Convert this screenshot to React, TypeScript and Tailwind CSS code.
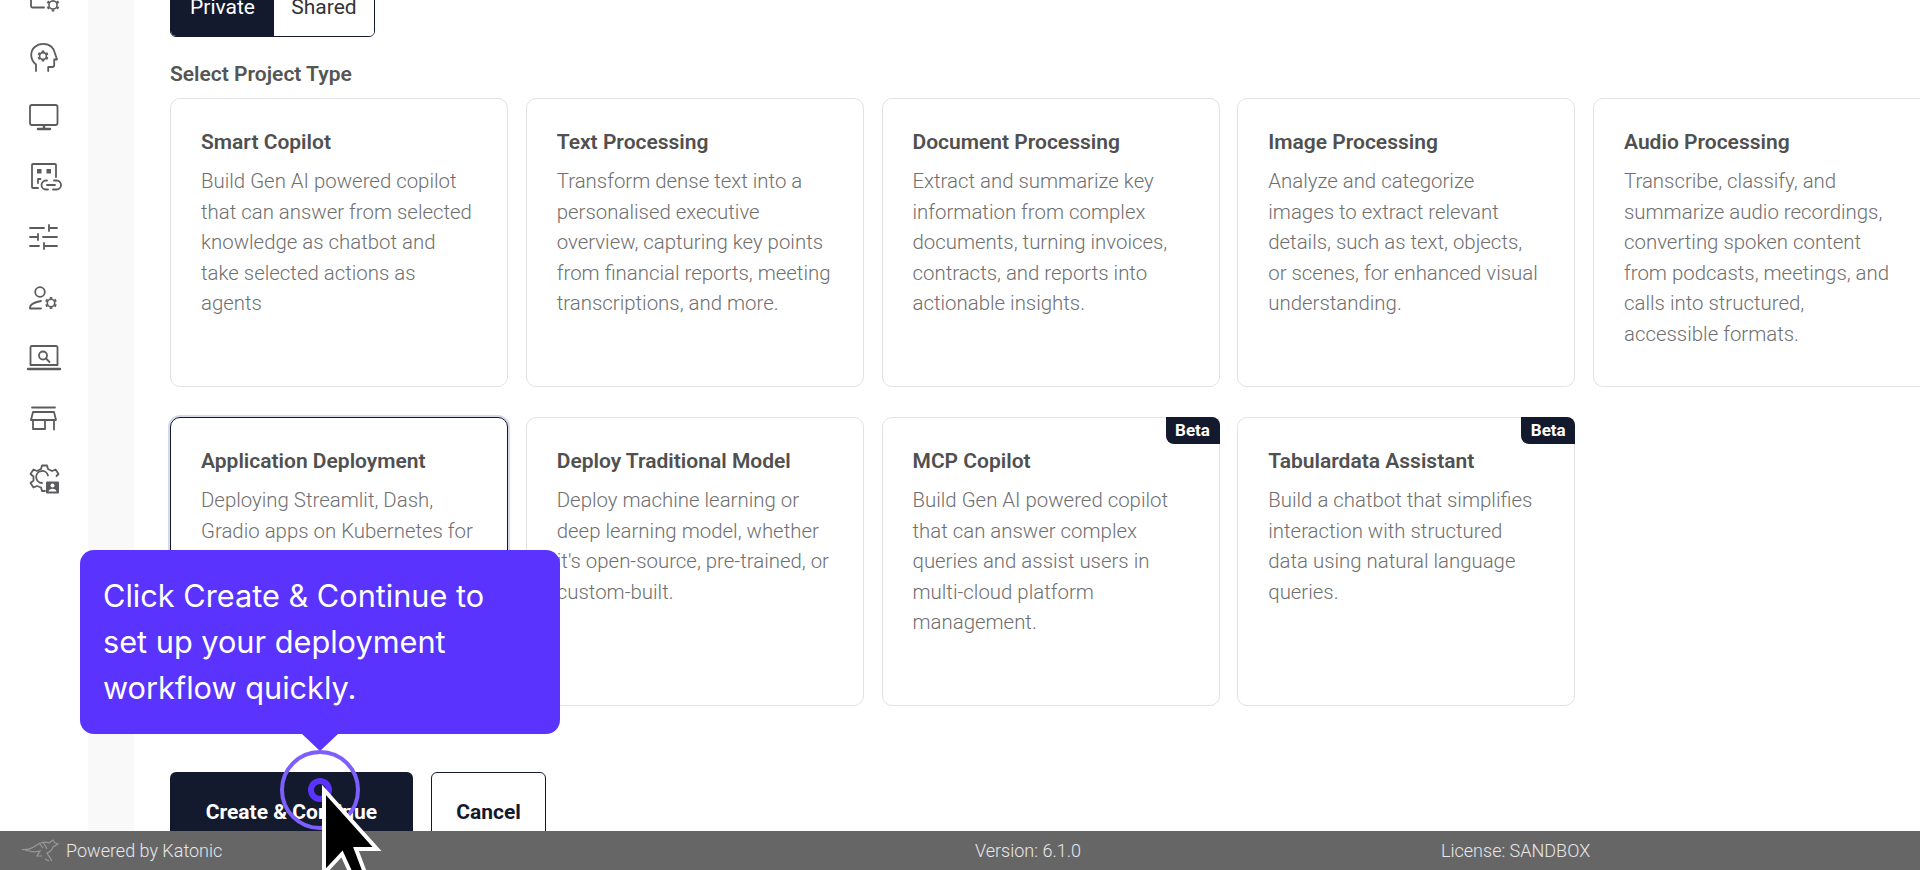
import React from 'react';

interface ProjectType {
  title: string;
  lines: string[];
  selected?: boolean;
  beta?: boolean;
}

const projectTypes: ProjectType[] = [
  {
    title: 'Smart Copilot',
    lines: ['Build Gen AI powered copilot', 'that can answer from selected', 'knowledge as chatbot and', 'take selected actions as', 'agents'],
  },
  {
    title: 'Text Processing',
    lines: ['Transform dense text into a', 'personalised executive', 'overview, capturing key points', 'from financial reports, meeting', 'transcriptions, and more.'],
  },
  {
    title: 'Document Processing',
    lines: ['Extract and summarize key', 'information from complex', 'documents, turning invoices,', 'contracts, and reports into', 'actionable insights.'],
  },
  {
    title: 'Image Processing',
    lines: ['Analyze and categorize', 'images to extract relevant', 'details, such as text, objects,', 'or scenes, for enhanced visual', 'understanding.'],
  },
  {
    title: 'Audio Processing',
    lines: ['Transcribe, classify, and', 'summarize audio recordings,', 'converting spoken content', 'from podcasts, meetings, and', 'calls into structured,', 'accessible formats.'],
  },
  {
    title: 'Application Deployment',
    lines: ['Deploying Streamlit, Dash,', 'Gradio apps on Kubernetes for', 'better scalability and', 'easier management.'],
    selected: true,
  },
  {
    title: 'Deploy Traditional Model',
    lines: ['Deploy machine learning or', 'deep learning model, whether', "it's open-source, pre-trained, or", 'custom-built.'],
  },
  {
    title: 'MCP Copilot',
    lines: ['Build Gen AI powered copilot', 'that can answer complex', 'queries and assist users in', 'multi-cloud platform', 'management.'],
    beta: true,
  },
  {
    title: 'Tabulardata Assistant',
    lines: ['Build a chatbot that simplifies', 'interaction with structured', 'data using natural language', 'queries.'],
    beta: true,
  },
];

const Gear = ({ x, y, r }: { x: number; y: number; r: number }) => (
  <g transform={`translate(${x} ${y})`}>
    <circle r={r * 0.62} strokeWidth={1.6} />
    {[0, 60, 120, 180, 240, 300].map((a) => (
      <path key={a} d={`M0 ${-r * 0.7}V${-r}`} transform={`rotate(${a})`} strokeWidth={2.6} strokeLinecap="butt" />
    ))}
  </g>
);

// drawn in page coordinates, so each viewBox is just a window round the icon
const navIcons: { cy: number; body: React.ReactNode }[] = [
  {
    cy: -3,
    body: (
      <>
        <path d="M31 -6V6a1.500 1.500 0 0 0 1.500 1.500H44" />
        <Gear x={53} y={5} r={6.500} />
      </>
    ),
  },
  {
    cy: 57,
    body: (
      <>
        <path d="M36 71v-6.500c-3-2.500-4.800-5.800-4.800-9.500 0-6.500 5.500-11.200 12-11.200 6.800 0 11.200 4.400 12 10.200l1.800 5.500h-2.800v5.500a2 2 0 0 1-2 2h-4v4" />
        <Gear x={43} y={56} r={5.500} />
      </>
    ),
  },
  {
    cy: 117,
    body: (
      <>
        <rect x={30} y={105} width={27.500} height={20} rx={2} />
        <path d="M44 125.500v3M38 129h12" strokeWidth={2.400} />
      </>
    ),
  },
  {
    cy: 177,
    body: (
      <>
        <path d="M38 188h-5a1 1 0 0 1-1-1v-22a1 1 0 0 1 1-1h22a1 1 0 0 1 1 1v12" />
        <path d="M37 169h4.500v4.500H37zM46.500 169H51v4.500h-4.500z" fill="#5c5c5f" stroke="none" />
        <path d="M38 183v-4h2.500" />
        <path d="M47 180.500h-1a4.500 4.500 0 0 0 0 9h2M54 180.500h2.500a4.500 4.500 0 0 1 0 9H53M47 185h8" />
      </>
    ),
  },
  {
    cy: 237,
    body: (
      <path d="M30 228h14M50 228h7M49 225v6M30 237h7M43 237h14M38 234v6M30 246h9M44 246h13M44 243v6" />
    ),
  },
  {
    cy: 297,
    body: (
      <>
        <circle cx={40} cy={292} r={4.800} />
        <path d="M30 308.500h11M30 308.500v-1c0-3 5.500-5.500 11-6.500" />
        <Gear x={51} y={303} r={6} />
      </>
    ),
  },
  {
    cy: 357,
    body: (
      <>
        <path d="M30.500 365V347.500a1.500 1.500 0 0 1 1.500-1.500h24a1.500 1.500 0 0 1 1.500 1.500V365z" />
        <path d="M28 369h32" strokeWidth={2.400} />
        <circle cx={43} cy={355.500} r={4} />
        <path d="M46 358.500l3.500 3.500" />
      </>
    ),
  },
  {
    cy: 417,
    body: (
      <path d="M32 407.500h23M33 412h21l2 8H31zM33 420v9h12v-9M54 420v9.500" />
    ),
  },
  {
    cy: 477,
    body: (
      <>
        <path d="M45 491l-3 0-1-3.500-4-1.500-3.500 1.500-3-4.500 3-2.500v-4l-3-2.500 3-4.500 3.500 1.500 4-2 1-3.500h5l1 3.500 4 2 3.500-1.500 3 4.500-2 2" />
        <path d="M42 483a6 6 0 1 1 6-7.500" />
        <rect x={46} y={481.500} width={13} height={12} rx={1} fill="#5c5c5f" stroke="none" />
        <circle cx={52.500} cy={485.500} r={2} fill="#fff" stroke="none" />
        <path d="M48.500 491.500c.5-2 2-2.800 4-2.800s3.500.8 4 2.800z" fill="#fff" stroke="none" />
      </>
    ),
  },
];

const Sidebar = () => (
  <div className="w-[88px] shrink-0 bg-white -mt-[33px] flex flex-col">
    {navIcons.map((icon) => (
      <div key={icon.cy} className="h-[60px] flex items-center justify-center">
        <svg
          width={40}
          height={40}
          viewBox={`24 ${icon.cy - 20} 40 40`}
          fill="none"
          stroke="#5c5c5f"
          strokeWidth={1.800}
          strokeLinecap="round"
          strokeLinejoin="round"
        >
          {icon.body}
        </svg>
      </div>
    ))}
  </div>
);

const Card = ({ item }: { item: ProjectType }) => (
  <div
    className={`relative h-[289px] rounded-[10px] bg-white pl-[30px] pr-[20px] pt-[28px] border ${
      item.selected ? 'border-[#141a2e] shadow-[0_0_0_2px_#d5d9ea]' : 'border-[#e2e2e2]'
    }`}
  >
    {item.beta && (
      <span className="absolute -top-px -right-px h-[27px] w-[54px] rounded-tr-[8px] rounded-bl-[8px] bg-[#141a2e] flex items-center justify-center text-[17px] font-bold text-white">
        Beta
      </span>
    )}
    <h3 className="text-[21px] leading-[30px] font-semibold text-[#505050]">{item.title}</h3>
    <div className="mt-[9px] text-[20.4px] leading-[30.6px] font-light text-[#6f6f6f] whitespace-nowrap">
      {item.lines.map((line) => (
        <div key={line}>{line}</div>
      ))}
    </div>
  </div>
);

const GuideOverlay = () => (
  <>
    <div className="absolute left-[80px] top-[550px] w-[480px] h-[184px] rounded-[14px] bg-[#5a33ff] pl-[23px] pt-[23px] font-['Inter',sans-serif] text-[30.7px] leading-[46px] text-white whitespace-nowrap">
      <div>Click Create &amp; Continue to</div>
      <div>set up your deployment</div>
      <div>workflow quickly.</div>
      <div className="absolute left-[222px] top-[184px] w-0 h-0 border-x-[18px] border-x-transparent border-t-[17px] border-t-[#5a33ff]" />
    </div>
    <div className="absolute left-[280px] top-[750px] w-[80px] h-[80px] rounded-full border-[4px] border-[#7d5fff]" />
    <div className="absolute left-[308px] top-[778px] w-[24px] h-[24px] rounded-full border-[6px] border-[#5a33ff]" />
    <svg className="absolute left-[315px] top-[782px]" width={80} height={88} viewBox="0 0 80 88">
      <path
        d="M9 8V88H12L27 72L38 96H52L41 67H62Z"
        fill="#000"
        stroke="#fff"
        strokeWidth={4}
        strokeLinejoin="miter"
      />
    </svg>
  </>
);

const Footer = () => (
  <div className="relative h-[39px] shrink-0 bg-[#666667] flex items-center pb-px text-[18px] font-light text-[#e8e8e8]">
    <div className="w-[975px] shrink-0 flex items-center pl-[21px]">
      <svg width={40} height={26} viewBox="0 0 40 26" fill="none" stroke="#9a9a9a" strokeWidth={1.200} className="mr-[5px]">
        <path d="M1 12.500c6 .5 10-1 14-4 5-3.500 10-4 13-2.500l4-3 2 3 3 1-5 3c-1 3-3 5-6 6l5 8" />
        <path d="M4 13c6 2 12 2 15 1l-3 5h5M18 6l4 5M22 5l4 7M24 22l4 2" />
      </svg>
      <span>Powered by Katonic</span>
    </div>
    <div className="w-[466px] shrink-0">Version: 6.1.0</div>
    <div>License: SANDBOX</div>
  </div>
);

export default function App() {
  return (
    <div className="relative h-screen w-full overflow-hidden bg-white flex flex-col font-['Roboto',sans-serif]">
      <div className="flex-1 min-h-0 flex overflow-hidden">
        <Sidebar />
        <div className="w-[46px] shrink-0 bg-[#f9f9fa]" />
        <div className="flex-1 min-w-0 pl-[36px] -mt-[21px]">
          <div className="flex w-[205px] h-[58px] rounded-[6px] border border-[#141a2e] overflow-hidden text-[21px]">
            <div className="w-[103px] bg-[#141a2e] text-white flex items-center justify-center">Private</div>
            <div className="flex-1 bg-white text-[#333] flex items-center justify-center">Shared</div>
          </div>
          <div className="mt-[25px] text-[21px] leading-[24px] font-semibold text-[#555]">Select Project Type</div>
          <div className="mt-[12px] grid grid-cols-[repeat(5,338px)] gap-x-[17.75px] gap-y-[30px]">
            {projectTypes.map((item) => (
              <Card key={item.title} item={item} />
            ))}
          </div>
          <div className="mt-[66px] flex gap-[18px]">
            <button className="w-[243px] h-[81px] rounded-[6px] bg-[#141a2e] text-white text-[21px] font-bold">
              Create &amp; Continue
            </button>
            <button className="w-[115px] h-[81px] rounded-[6px] border border-[#141a2e] bg-white text-[#141a2e] text-[21px] font-bold">
              Cancel
            </button>
          </div>
        </div>
      </div>
      <Footer />
      <GuideOverlay />
    </div>
  );
}
